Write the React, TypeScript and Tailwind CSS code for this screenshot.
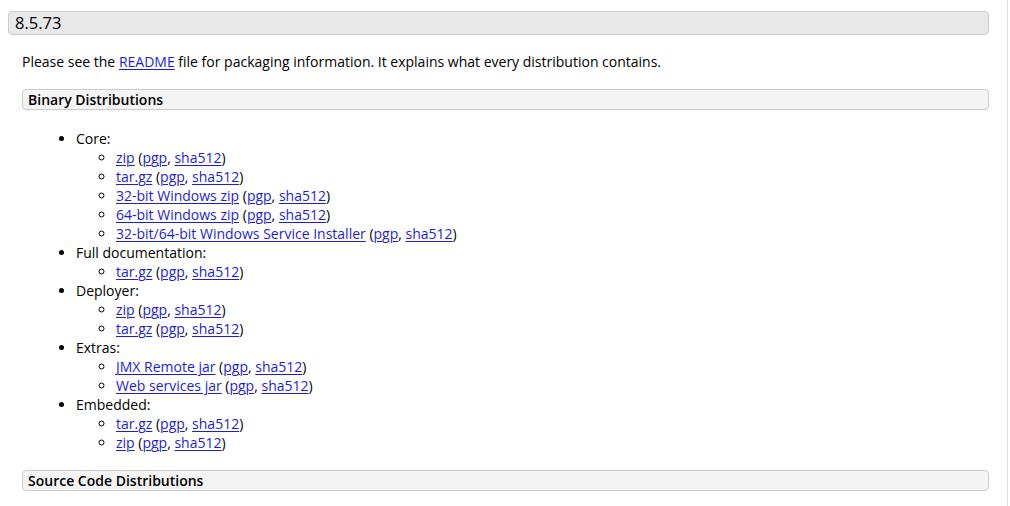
import React from "react";

type Group = { title: string; items: string[] };

const groups: Group[] = [
  { title: "Core:", items: ["zip", "tar.gz", "32-bit Windows zip", "64-bit Windows zip", "32-bit/64-bit Windows Service Installer"] },
  { title: "Full documentation:", items: ["tar.gz"] },
  { title: "Deployer:", items: ["zip", "tar.gz"] },
  { title: "Extras:", items: ["JMX Remote jar", "Web services jar"] },
  { title: "Embedded:", items: ["tar.gz", "zip"] },
];

const linkCls = "text-[#1c1ce0] underline underline-offset-[2px] decoration-1";

export default function App() {
  return (
    <div className="flex h-[506px] w-[1010px] bg-white text-black" style={{ fontFamily: '"Open Sans", "Liberation Sans", sans-serif' }}>
      <div className="w-[1008px] border-r border-[#e4e4e4] pl-[8px] pr-[18px] pt-[11px]">
        <h3 className="h-[24px] rounded-[4px] border border-[#cccccc] bg-[#e8e8e8] pl-[6px] text-[16.5px] leading-[22px]">8.5.73</h3>
        <div className="pl-[14px]">
          <p className="mt-[17px] text-[14px] leading-[19px]">
            Please see the <a className={linkCls}>README</a> file for packaging information. It explains what every distribution contains.
          </p>
          <h4 className="mt-[18px] h-[21px] rounded-[4px] border border-[#cccccc] bg-[#f4f4f4] pl-[5px] text-[14px] font-semibold leading-[19px]">Binary Distributions</h4>
          <ul className="mt-[19px] list-disc pl-[54px] text-[14px] leading-[19px]">
            {groups.map((g) => (
              <li key={g.title}>
                {g.title}
                <ul className="list-[circle] pl-[40px]">
                  {g.items.map((it, i) => (
                    <li key={i}>
                      <a className={linkCls}>{it}</a> (<a className={linkCls}>pgp</a>, <a className={linkCls}>sha512</a>)
                    </li>
                  ))}
                </ul>
              </li>
            ))}
          </ul>
          <h4 className="mt-[18px] h-[21px] rounded-[4px] border border-[#cccccc] bg-[#f4f4f4] pl-[5px] text-[14px] font-semibold leading-[19px]">Source Code Distributions</h4>
        </div>
      </div>
    </div>
  );
}
